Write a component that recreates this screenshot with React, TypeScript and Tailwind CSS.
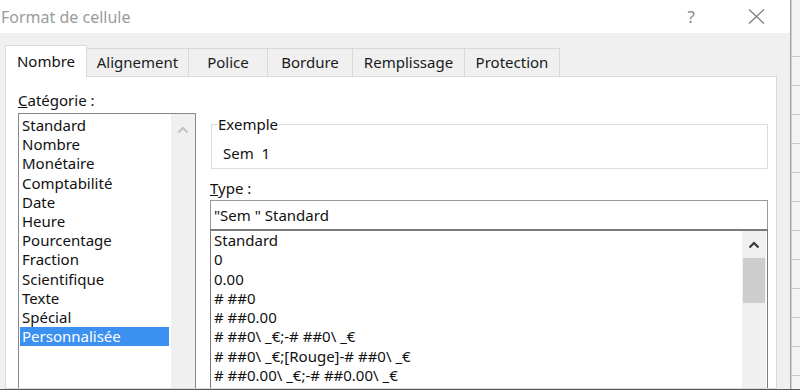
import React from "react";

const categories = [
  "Standard",
  "Nombre",
  "Monétaire",
  "Comptabilité",
  "Date",
  "Heure",
  "Pourcentage",
  "Fraction",
  "Scientifique",
  "Texte",
  "Spécial",
  "Personnalisée",
];

const formats = [
  "Standard",
  "0",
  "0.00",
  "# ##0",
  "# ##0.00",
  "# ##0\\ _€;-# ##0\\ _€",
  "# ##0\\ _€;[Rouge]-# ##0\\ _€",
  "# ##0.00\\ _€;-# ##0.00\\ _€",
  "# ##0.00\\ _€;[Rouge]-# ##0.00\\ _€",
];

const tabs = [
  { label: "Alignement", w: "w-[102px]" },
  { label: "Police", w: "w-[79px]" },
  { label: "Bordure", w: "w-[85px]" },
  { label: "Remplissage", w: "w-[112px]" },
  { label: "Protection", w: "w-[95px]" },
];

function Chevron({ color }: { color: string }) {
  return (
    <svg width="12" height="8" viewBox="0 0 12 8">
      <polyline
        points="1.5,6.5 6,2 10.5,6.5"
        fill="none"
        stroke={color}
        strokeWidth="2"
      />
    </svg>
  );
}

export default function App() {
  return (
    <div className="w-[800px] h-[390px] overflow-hidden flex bg-[#f0f0f0] font-['Noto_Sans',sans-serif] text-[15px] text-[#111] border-b border-[#5a5a5a]">
      <div className="w-[791px] h-full flex flex-col border-r border-[#a0a0a0] shrink-0">
        {/* title bar */}
        <div className="h-[33px] bg-white flex items-center shrink-0">
          <span className="pl-[1px] text-[16px] text-[#9b9b9b]">Format de cellule</span>
          <span className="ml-auto text-[17px] text-[#888] leading-none">?</span>
          <svg width="17" height="15" viewBox="0 0 17 15" className="ml-[53px] mr-[25px]">
            <line x1="1" y1="0.5" x2="16" y2="14.5" stroke="#777" strokeWidth="1.2" />
            <line x1="16" y1="0.5" x2="1" y2="14.5" stroke="#777" strokeWidth="1.2" />
          </svg>
        </div>

        <div className="flex-1 flex flex-col pl-[5px] pr-[13px] pt-[12px] min-h-0">
          {/* tabs */}
          <div className="h-[31px] flex items-end shrink-0">
            <div className="relative z-10 w-[82px] h-[32px] mb-[-1px] bg-white border border-b-0 border-[#d9d9d9] flex items-center justify-center">
              Nombre
            </div>
            {tabs.map((t) => (
              <div
                key={t.label}
                className={`${t.w} h-[28px] border-t border-r border-[#d9d9d9] flex items-center justify-center text-[#1a1a1a]`}
              >
                {t.label}
              </div>
            ))}
          </div>

          {/* panel */}
          <div className="flex-1 bg-white border border-[#d9d9d9] flex pl-[12px] pr-[10px] min-h-0 overflow-hidden">
            {/* left column */}
            <div className="w-[178px] shrink-0 flex flex-col">
              <div className="mt-[13px] leading-[20px] shrink-0">
                <span className="underline">C</span>atégorie :
              </div>
              <div className="mt-[3px] h-[290px] shrink-0 border border-[#828790] flex">
                <div className="flex-1 pt-[2px] pl-[1px]">
                  {categories.map((c) => (
                    <div
                      key={c}
                      className={`w-[149px] pl-[2px] leading-[19.2px] ${
                        c === "Personnalisée" ? "bg-[#3c91f0] text-white" : ""
                      }`}
                    >
                      {c}
                    </div>
                  ))}
                </div>
                <div className="w-[24px] bg-[#f0f0f0] flex justify-center pt-[12px]">
                  <div className="h-fit">
                    <Chevron color="#c4c4c4" />
                  </div>
                </div>
              </div>
            </div>

            {/* right column */}
            <div className="ml-[14px] flex-1 flex flex-col">
              <fieldset className="mt-[37px] ml-[1px] w-[557px] h-[55px] shrink-0 border border-[#dcdcdc] pl-[5px]">
                <legend className="px-[1px] leading-[20px]">Exemple</legend>
                <div className="pl-[6px] mt-[9px] leading-[20px] whitespace-pre">Sem  1</div>
              </fieldset>

              <div className="mt-[9px] leading-[20px] shrink-0">
                <span className="underline">T</span>ype :
              </div>
              <div className="mt-[2px] h-[29px] shrink-0 border border-b-0 border-[#9a9a9a] flex items-center pl-[3px]">
                "Sem " Standard
              </div>
              <div className="h-[200px] shrink-0 border border-t-2 border-[#7a7a7a] flex">
                <div className="flex-1 pl-[3px]">
                  {formats.map((f) => (
                    <div key={f} className="leading-[19.3px] whitespace-pre">
                      {f}
                    </div>
                  ))}
                </div>
                <div className="w-[24px] mr-[1px] bg-[#f0f0f0] flex flex-col px-[1px]">
                  <div className="h-[27px] flex items-center justify-center">
                    <Chevron color="#333" />
                  </div>
                  <div className="h-[45px] bg-[#cdcdcd]" />
                </div>
              </div>
            </div>
          </div>
        </div>
      </div>

      {/* sheet behind the dialog */}
      <div className="flex-1 bg-[#f3f3f3] border-l border-[#d0d0d0] pt-[28px] flex flex-col">
        {Array.from({ length: 12 }).map((_, i) => (
          <div key={i} className="h-[29px] shrink-0 border-b border-[#c8c8c8]" />
        ))}
      </div>
    </div>
  );
}
